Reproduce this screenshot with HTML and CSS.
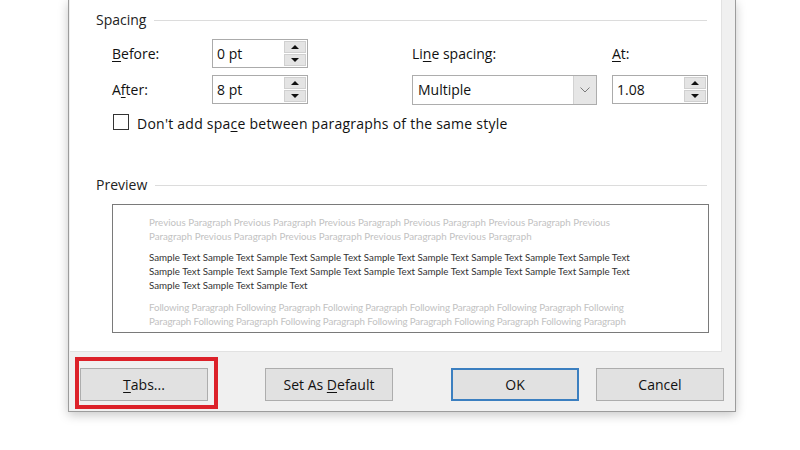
FILE: index.html
```html
<!DOCTYPE html>
<html>
<head>
<meta charset="utf-8">
<link rel="stylesheet" href="styles.css">
</head>
<body>
<div class="dialog">
  <div class="panel">
    <div class="group-head"><span>Spacing</span><div class="rule"></div></div>
    <div class="grid">
      <div class="label"><u>B</u>efore:</div>
      <div class="spin"><span class="val">0 pt</span><div class="arrows"><div class="half"><i class="up"></i></div><div class="half"><i class="down"></i></div></div></div>
      <div class="label">Li<u>n</u>e spacing:</div>
      <div class="label"><u>A</u>t:</div>

      <div class="label">A<u>f</u>ter:</div>
      <div class="spin"><span class="val">8 pt</span><div class="arrows"><div class="half"><i class="up"></i></div><div class="half"><i class="down"></i></div></div></div>
      <div class="combo"><span class="val">Multiple</span><div class="drop"><svg width="10" height="6" viewBox="0 0 10 6"><polyline points="0.5,0.5 5,5 9.5,0.5" fill="none" stroke="#7a7a7a" stroke-width="1"/></svg></div></div>
      <div class="spin"><span class="val">1.08</span><div class="arrows"><div class="half"><i class="up"></i></div><div class="half"><i class="down"></i></div></div></div>
    </div>
    <div class="check-row"><div class="checkbox"></div><span class="check-text">Don't add spa<u>c</u>e between paragraphs of the same style</span></div>

    <div class="group-head preview-head"><span>Preview</span><div class="rule"></div></div>
    <div class="preview">
      <div class="para faint">
        <div>Previous Paragraph Previous Paragraph Previous Paragraph Previous Paragraph Previous Paragraph Previous</div>
        <div>Paragraph Previous Paragraph Previous Paragraph Previous Paragraph Previous Paragraph</div>
      </div>
      <div class="para sample">
        <div>Sample Text Sample Text Sample Text Sample Text Sample Text Sample Text Sample Text Sample Text Sample Text</div>
        <div>Sample Text Sample Text Sample Text Sample Text Sample Text Sample Text Sample Text Sample Text Sample Text</div>
        <div>Sample Text Sample Text Sample Text</div>
      </div>
      <div class="para faint follow">
        <div>Following Paragraph Following Paragraph Following Paragraph Following Paragraph Following Paragraph Following</div>
        <div>Paragraph Following Paragraph Following Paragraph Following Paragraph Following Paragraph Following Paragraph</div>
      </div>
    </div>
  </div>
  <div class="footer">
    <div class="highlight"><div class="btn"><span><u>T</u>abs...</span></div></div>
    <div class="btn btn-default"><span>Set As <u>D</u>efault</span></div>
    <div class="btn btn-ok"><span>OK</span></div>
    <div class="btn btn-cancel"><span>Cancel</span></div>
  </div>
</div>
</body>
</html>
```

FILE: styles.css
```css
* { box-sizing: border-box; }
html, body { margin: 0; padding: 0; }
body {
  background: #ffffff;
  font-family: "Open Sans", "Noto Sans", sans-serif;
  font-size: 14px;
  color: #111;
  width: 800px;
  height: 450px;
  overflow: hidden;
}
u { text-decoration: underline; text-underline-offset: 2px; text-decoration-thickness: 1px; }

.dialog {
  margin-left: 68px;
  width: 668px;
  height: 412px;
  background: #f0f0f0;
  border: 1px solid #9c9c9c;
  border-top: none;
  box-shadow: 0 3px 10px rgba(0,0,0,0.22);
  display: flex;
  flex-direction: column;
}

.panel {
  margin-left: 1px;
  width: 652px;
  height: 352px;
  background: #ffffff;
  border-right: 1px solid #e2e2e2;
  border-bottom: 1px solid #e2e2e2;
  padding: 10px 14px 0 26px;
}

.group-head {
  display: flex;
  align-items: center;
  gap: 8px;
  line-height: 19px;
  height: 19px;
  color: #222;
}
.group-head .rule { flex: 1; height: 1px; background: #dcdcdc; margin-top: 1px; }

.grid {
  margin: 10px 0 0 16px;
  display: grid;
  grid-template-columns: 100px 200px 200px 96px;
  grid-auto-rows: 29px;
  row-gap: 7px;
}
.label { align-self: center; line-height: 19px; }

.spin {
  width: 96px;
  height: 29px;
  border: 1px solid #ababab;
  background: #fff;
  display: flex;
}
.val { flex: 1; padding-left: 4px; line-height: 27px; }
.arrows {
  width: 22px;
  margin: 1px 1px 1px 0;
  display: flex;
  flex-direction: column;
  gap: 1px;
}
.half {
  flex: 1;
  background: #e4e4e4;
  border: 1px solid #d0d0d0;
  display: flex;
  align-items: center;
  justify-content: center;
}
.up, .down {
  width: 0; height: 0;
  border-left: 4px solid transparent;
  border-right: 4px solid transparent;
}
.up { border-bottom: 4px solid #111; }
.down { border-top: 4px solid #111; }

.combo {
  width: 185px;
  height: 30px;
  border: 1px solid #adadad;
  background: #fff;
  display: flex;
}
.combo .val { padding-left: 5px; line-height: 28px; }
.drop {
  width: 23px;
  background: #e6e6e6;
  border-left: 1px solid #d2d2d2;
  display: flex;
  align-items: center;
  justify-content: center;
}

.check-row {
  margin: 8px 0 0 17px;
  display: flex;
  align-items: center;
  gap: 8px;
  line-height: 19px;
}
.check-text { letter-spacing: 0.24px; padding-top: 2px; }
.checkbox { width: 16px; height: 16px; border: 1px solid #333; background: #fff; margin-top: -1px; }

.preview-head { margin-top: 42px; }

.preview {
  margin: 10px 0 0 16px;
  width: 597px;
  height: 129px;
  border: 1px solid #7a7a7a;
  background: #fff;
  overflow: hidden;
  padding: 10px 0 0 36px;
  font-family: "Lato", "Open Sans", sans-serif;
  font-size: 9.75px;
  line-height: 14px;
  white-space: nowrap;
}
.para + .para { margin-top: 7px; }
.para.follow { margin-top: 8px; letter-spacing: -0.12px; }
.faint { color: #c2c2c2; }
.sample { color: #333; }

.footer {
  display: flex;
  align-items: flex-start;
  padding: 5px 0 0 6px;
}
.highlight {
  border: 4px solid #dc2129;
  padding: 7px 6px 4px 1px;
}
.btn {
  width: 128px;
  height: 33px;
  background: #e1e1e1;
  border: 1px solid #adadad;
  display: flex;
  align-items: center;
  justify-content: center;
  color: #111;
}
.btn-default { margin: 11px 0 0 47px; }
.btn-ok { margin: 11px 0 0 58px; border: 2px solid #3b7fc0; }
.btn-cancel { margin: 11px 0 0 17px; }
```
